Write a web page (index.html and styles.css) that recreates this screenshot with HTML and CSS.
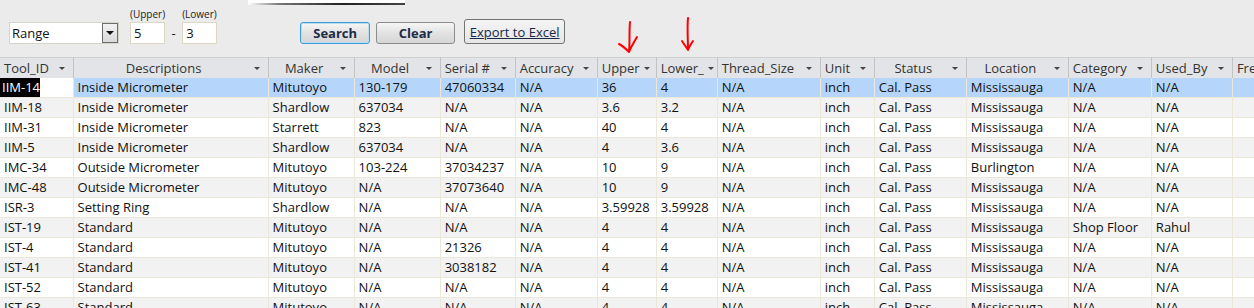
FILE: index.html
```html
<!DOCTYPE html>
<html lang="en">
<head>
  <meta charset="UTF-8">
  <title>Tool Search</title>
  <link rel="stylesheet" href="styles.css">
</head>
<body>
  <div class="toolbar">
    <div class="clip-strip"></div>

    <div class="combo">
      <span class="combo-text">Range</span>
      <span class="combo-btn"><span class="tri"></span></span>
    </div>

    <div class="limit">
      <span class="limit-label">(Upper)</span>
      <div class="box">5</div>
    </div>
    <span class="dash">-</span>
    <div class="limit">
      <span class="limit-label">(Lower)</span>
      <div class="box">3</div>
    </div>

    <button class="btn btn-search">Search</button>
    <button class="btn btn-clear">Clear</button>
    <button class="btn btn-export">Export to Excel</button>

    <!-- red marker arrows -->
    <svg class="marks" width="100" height="60" viewBox="0 0 100 60">
      <path d="M30 22 C29 32 30 42 29 52 M19 44 C23 46 26 49 29 52 C31 47 34 42 37 37" fill="none" stroke="#f00" stroke-width="2" stroke-linecap="round" stroke-linejoin="round"/>
      <path d="M88 18 C87 28 88 40 88 50 M82 41 C84 44 86 47 88 50 C89 47 91 44 93 41" fill="none" stroke="#f00" stroke-width="2" stroke-linecap="round" stroke-linejoin="round"/>
    </svg>
  </div>

  <table class="grid">
    <colgroup>
      <col style="width:73px"><col style="width:195px"><col style="width:86px"><col style="width:86px">
      <col style="width:75px"><col style="width:82px"><col style="width:59px"><col style="width:61px">
      <col style="width:103px"><col style="width:54px"><col style="width:92px"><col style="width:102px">
      <col style="width:83px"><col style="width:81px"><col style="width:60px">
    </colgroup>
    <thead>
      <tr>
        <th><div class="th"><span class="lbl">Tool_ID</span><span class="arr"></span></div></th>
        <th><div class="th center"><span class="lbl">Descriptions</span><span class="arr"></span></div></th>
        <th><div class="th center"><span class="lbl">Maker</span><span class="arr"></span></div></th>
        <th><div class="th center"><span class="lbl">Model</span><span class="arr"></span></div></th>
        <th><div class="th"><span class="lbl">Serial #</span><span class="arr"></span></div></th>
        <th><div class="th"><span class="lbl">Accuracy</span><span class="arr"></span></div></th>
        <th><div class="th"><span class="lbl">Upper</span><span class="arr"></span></div></th>
        <th><div class="th"><span class="lbl">Lower_</span><span class="arr"></span></div></th>
        <th><div class="th"><span class="lbl">Thread_Size</span><span class="arr"></span></div></th>
        <th><div class="th"><span class="lbl">Unit</span><span class="arr"></span></div></th>
        <th><div class="th center"><span class="lbl">Status</span><span class="arr"></span></div></th>
        <th><div class="th center"><span class="lbl">Location</span><span class="arr"></span></div></th>
        <th><div class="th"><span class="lbl">Category</span><span class="arr"></span></div></th>
        <th><div class="th"><span class="lbl">Used_By</span><span class="arr"></span></div></th>
        <th><div class="th"><span class="lbl">Fre</span></div></th>
      </tr>
    </thead>
    <tbody>
      <tr class="selected">
        <td class="id-cell"><span class="cursor">IIM-14</span></td><td>Inside Micrometer</td><td>Mitutoyo</td><td>130-179</td><td>47060334</td><td>N/A</td><td>36</td><td>4</td><td>N/A</td><td>inch</td><td>Cal. Pass</td><td>Mississauga</td><td>N/A</td><td>N/A</td><td></td>
      </tr>
      <tr>
        <td>IIM-18</td><td>Inside Micrometer</td><td>Shardlow</td><td>637034</td><td>N/A</td><td>N/A</td><td>3.6</td><td>3.2</td><td>N/A</td><td>inch</td><td>Cal. Pass</td><td>Mississauga</td><td>N/A</td><td>N/A</td><td></td>
      </tr>
      <tr>
        <td>IIM-31</td><td>Inside Micrometer</td><td>Starrett</td><td>823</td><td>N/A</td><td>N/A</td><td>40</td><td>4</td><td>N/A</td><td>inch</td><td>Cal. Pass</td><td>Mississauga</td><td>N/A</td><td>N/A</td><td></td>
      </tr>
      <tr>
        <td>IIM-5</td><td>Inside Micrometer</td><td>Shardlow</td><td>637034</td><td>N/A</td><td>N/A</td><td>4</td><td>3.6</td><td>N/A</td><td>inch</td><td>Cal. Pass</td><td>Mississauga</td><td>N/A</td><td>N/A</td><td></td>
      </tr>
      <tr>
        <td>IMC-34</td><td>Outside Micrometer</td><td>Mitutoyo</td><td>103-224</td><td>37034237</td><td>N/A</td><td>10</td><td>9</td><td>N/A</td><td>inch</td><td>Cal. Pass</td><td>Burlington</td><td>N/A</td><td>N/A</td><td></td>
      </tr>
      <tr>
        <td>IMC-48</td><td>Outside Micrometer</td><td>Mitutoyo</td><td>N/A</td><td>37073640</td><td>N/A</td><td>10</td><td>9</td><td>N/A</td><td>inch</td><td>Cal. Pass</td><td>Mississauga</td><td>N/A</td><td>N/A</td><td></td>
      </tr>
      <tr>
        <td>ISR-3</td><td>Setting Ring</td><td>Shardlow</td><td>N/A</td><td>N/A</td><td>N/A</td><td>3.59928</td><td>3.59928</td><td>N/A</td><td>inch</td><td>Cal. Pass</td><td>Mississauga</td><td>N/A</td><td>N/A</td><td></td>
      </tr>
      <tr>
        <td>IST-19</td><td>Standard</td><td>Mitutoyo</td><td>N/A</td><td>N/A</td><td>N/A</td><td>4</td><td>4</td><td>N/A</td><td>inch</td><td>Cal. Pass</td><td>Mississauga</td><td>Shop Floor</td><td>Rahul</td><td></td>
      </tr>
      <tr>
        <td>IST-4</td><td>Standard</td><td>Mitutoyo</td><td>N/A</td><td>21326</td><td>N/A</td><td>4</td><td>4</td><td>N/A</td><td>inch</td><td>Cal. Pass</td><td>Mississauga</td><td>N/A</td><td>N/A</td><td></td>
      </tr>
      <tr>
        <td>IST-41</td><td>Standard</td><td>Mitutoyo</td><td>N/A</td><td>3038182</td><td>N/A</td><td>4</td><td>4</td><td>N/A</td><td>inch</td><td>Cal. Pass</td><td>Mississauga</td><td>N/A</td><td>N/A</td><td></td>
      </tr>
      <tr>
        <td>IST-52</td><td>Standard</td><td>Mitutoyo</td><td>N/A</td><td>N/A</td><td>N/A</td><td>4</td><td>4</td><td>N/A</td><td>inch</td><td>Cal. Pass</td><td>Mississauga</td><td>N/A</td><td>N/A</td><td></td>
      </tr>
      <tr>
        <td>IST-63</td><td>Standard</td><td>Mitutoyo</td><td>N/A</td><td>N/A</td><td>N/A</td><td>4</td><td>4</td><td>N/A</td><td>inch</td><td>Cal. Pass</td><td>Mississauga</td><td>N/A</td><td>N/A</td><td></td>
      </tr>
    </tbody>
  </table>
</body>
</html>
```

FILE: styles.css
```css
/* General Styles */
body {
  margin: 0;
  padding: 0;
  background-color: #ebebeb;
  font-family: "Open Sans", "Noto Sans", Arial, sans-serif;
  font-size: 13px;
  color: #111;
  overflow: hidden;
  width: 1254px;
  height: 308px;
}

/* Top search bar */
.toolbar {
  position: relative;
  height: 57px;
  box-sizing: border-box;
  display: flex;
  align-items: flex-end;
  padding: 0 0 13px 9px;
}

.clip-strip {
  position: absolute;
  left: 248px;
  top: 0;
  width: 157px;
  height: 5px;
  background: linear-gradient(to bottom, #fff 0, #fff 3px, transparent 3px),
              linear-gradient(to right, #fff 0, #777 20%, #222 60%, #444 100%);
}

.combo {
  width: 110px;
  height: 22px;
  box-sizing: border-box;
  background-color: #fff;
  border: 1px solid #d6d3c8;
  display: flex;
  align-items: center;
  margin-right: 11px;
}

.combo-text {
  flex: 1;
  padding-left: 2px;
  font-size: 13px;
}

.combo-btn {
  width: 16px;
  height: 20px;
  box-sizing: border-box;
  border: 1px solid #6e6e6e;
  background: linear-gradient(#f2f2f2, #d9d9d9);
  display: flex;
  align-items: center;
  justify-content: center;
}

.tri {
  width: 0;
  height: 0;
  border-left: 4px solid transparent;
  border-right: 4px solid transparent;
  border-top: 4px solid #111;
}

.limit {
  display: flex;
  flex-direction: column;
}

.limit-label {
  font-size: 10px;
  line-height: 12px;
  margin-bottom: 2px;
  color: #222;
}

.box {
  width: 35px;
  height: 22px;
  box-sizing: border-box;
  background-color: #fff;
  border: 1px solid #ddd8c4;
  padding-left: 3px;
  line-height: 20px;
  font-size: 13px;
}

.dash {
  width: 17px;
  text-align: center;
  line-height: 22px;
}

.btn {
  font-family: "Open Sans", "Noto Sans", Arial, sans-serif;
  font-size: 13px;
  height: 22px;
  padding: 0;
  border-radius: 3px;
  background: linear-gradient(#f6f6f6, #e2e2e2 50%, #d6d6d6);
  color: #1c2b47;
}

.btn-search {
  width: 70px;
  margin-left: 83px;
  border: 1px solid #3d9bd6;
  box-shadow: inset 0 0 0 1px #b9def3;
  font-weight: bold;
}

.btn-clear {
  width: 79px;
  margin-left: 6px;
  border: 1px solid #8c8c8c;
  font-weight: bold;
}

.btn-export {
  width: 101px;
  height: 25px;
  margin-left: 9px;
  border: 1px solid #747474;
  background: linear-gradient(#f4f4f4, #e6e6e6);
  text-decoration: underline;
  color: #172848;
}

.marks {
  position: absolute;
  left: 600px;
  top: 0;
}

/* Data grid */
.grid {
  table-layout: fixed;
  border-collapse: collapse;
  width: 1293px;
}

.grid th {
  height: 20px;
  padding: 0;
  background-color: #e2e4e7;
  border-top: 1px solid #cfcfcf;
  border-right: 1px solid #c3c3c3;
  font-weight: normal;
  color: #333;
}

.th {
  display: flex;
  align-items: center;
  height: 20px;
  padding: 0 8px 0 4px;
  white-space: nowrap;
  overflow: hidden;
}

.th .lbl {
  flex: 1;
  text-align: left;
}

.th.center .lbl {
  text-align: center;
}

.arr {
  width: 0;
  height: 0;
  margin-left: 4px;
  border-left: 3px solid transparent;
  border-right: 3px solid transparent;
  border-top: 3px solid #444;
}

.grid td {
  height: 19px;
  padding: 0 0 0 4px;
  border-right: 1px solid #ebe7d9;
  border-bottom: 1px solid #ebe7d9;
  background-color: #fff;
  white-space: nowrap;
  overflow: hidden;
  line-height: 19px;
}

.grid tbody tr:nth-child(even) td {
  background-color: #f2f2f2;
}

.grid tr.selected td {
  background-color: #b5d6fa;
}

.grid tr.selected td.id-cell {
  background-color: #fff;
  padding-left: 0;
}

.cursor {
  background-color: #000;
  color: #fff;
  padding: 2px 0 2px 2px;
}
```
